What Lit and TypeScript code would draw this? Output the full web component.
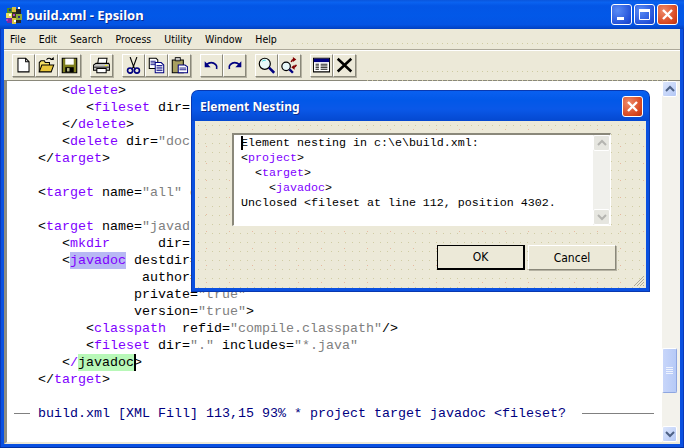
import { LitElement, html, css, svg } from "lit";
import { customElement } from "lit/decorators.js";

const ic = (body: unknown) =>
  html`<svg width="17" height="17" viewBox="0 0 20 20">${body}</svg>`;

const icons = {
  new: svg`<path d="M3.500 1.500h9l4 4v12h-13z" fill="#fff" stroke="#000" stroke-width="1.200"/><path d="M12.500 1.500v4h4" fill="none" stroke="#000" stroke-width="1.200"/>`,
  open: svg`<path d="M1.500 17.500v-11l2-2h4l1 2h5v3" fill="#f5e063" stroke="#000" stroke-width="1.200"/><path d="M1.500 17.500l3-8h14l-3 8z" fill="#e8c63a" stroke="#000" stroke-width="1.200"/><path d="M10 3q3-3 6 0" fill="none" stroke="#000" stroke-width="1.200"/><path d="M14 3.500h4.500v-3.500z" fill="#000"/>`,
  save: svg`<path d="M1.500 1.500h17v17h-17z" fill="#7f7f1f" stroke="#000" stroke-width="1.300"/><path d="M5 2h10v7H5z" fill="#fff"/><path d="M5 12h10v6H5z" fill="#000"/><path d="M7 13h3v4H7z" fill="#b8b88a"/>`,
  print: svg`<path d="M6.500 1.500h10l-1 7h-10z" fill="#fff" stroke="#000" stroke-width="1.200"/><path d="M.5 9.500l3-2h15l1 2v6H.5z" fill="#c0c0c0" stroke="#000" stroke-width="1.200"/><path d="M1 12h18" stroke="#000"/><path d="M4.500 13.500h11v5h-11z" fill="#fff" stroke="#000" stroke-width="1.200"/><path d="M14 10h3" stroke="#ff0"/>`,
  cut: svg`<path d="M6 0l4 11 4-11" fill="none" stroke="#000" stroke-width="1.300"/><path d="M10 11l-2 4M10 11l2 4" stroke="#000" stroke-width="1.300"/><circle cx="6" cy="16" r="3" fill="none" stroke="#000080" stroke-width="1.900"/><circle cx="14" cy="16" r="3" fill="none" stroke="#000080" stroke-width="1.900"/>`,
  copy: svg`<path d="M1.500 1.500h8l2 2v10h-10z" fill="#fff" stroke="#000" stroke-width="1.200"/><path d="M3 5h6M3 7h6M3 9h6" stroke="#000080"/><path d="M8.500 6.500h7l3 3v9h-10z" fill="#fff" stroke="#000080" stroke-width="1.200"/><path d="M10 10h7M10 12h7M10 14h7M10 16h7" stroke="#000080"/>`,
  paste: svg`<path d="M1.500 3.500h13v15h-13z" fill="#a8a060" stroke="#000" stroke-width="1.200"/><path d="M5 .5h6v4H5z" fill="#c0c0c0" stroke="#000"/><path d="M8.500 9.500h8l3 2v7h-11z" fill="#fff" stroke="#000080" stroke-width="1.200"/><path d="M10 13h8M10 15h8" stroke="#000080"/>`,
  undo: svg`<path d="M4 9q6-5 11 0 2 2 1 5" fill="none" stroke="#000080" stroke-width="2"/><path d="M2 5v7h7z" fill="#000080"/>`,
  redo: svg`<path d="M16 9q-6-5-11 0-2 2-1 5" fill="none" stroke="#000080" stroke-width="2"/><path d="M18 5v7h-7z" fill="#000080"/>`,
  find: svg`<circle cx="8" cy="8" r="6.500" fill="#e8f8f8" stroke="#000" stroke-width="1.400"/><path d="M5 5q2-2 4-1" stroke="#2cc" fill="none"/><path d="M13 12.500l6 6" stroke="#000080" stroke-width="3"/>`,
  replace: svg`<circle cx="6" cy="11" r="5" fill="#e8f8f8" stroke="#000" stroke-width="1.400"/><path d="M10 14.500l4 4" stroke="#000080" stroke-width="2.800"/><path d="M12 6q1-3 3-3" stroke="#800000" stroke-width="1.800" fill="none"/><path d="M14 0l4 3-4 3z" fill="#800000"/><path d="M18 9q-1 3-3 3" stroke="#800000" stroke-width="1.800" fill="none"/><path d="M16 9l-4 3 4 3z" fill="#800000"/>`,
  list: svg`<path d="M.5 1.500h19v16H.5z" fill="#fff" stroke="#000" stroke-width="1.200"/><path d="M1 2h18v4H1z" fill="#000080"/><path d="M3 8.500h4M9 8.500h8M3 10.500h4M9 10.500h8M3 12.500h4M9 12.500h8M3 14.500h4M9 14.500h8" stroke="#000"/>`,
  x: svg`<path d="M2 2l16 15M18 2L2 17" stroke="#000" stroke-width="3"/>`,
};

const groups: (keyof typeof icons)[][] = [
  ["new", "open", "save"],
  ["print"],
  ["cut", "copy", "paste"],
  ["undo", "redo"],
  ["find", "replace"],
  ["list", "x"],
];

const t = (s: string) => html`<span class="t">${s}</span>`;
const q = (s: string) => html`<span class="q">${s}</span>`;

const code = [
  html`      &lt;${t("delete")}&gt;`,
  html`         &lt;${t("fileset")} dir=`,
  html`      &lt;/${t("delete")}&gt;`,
  html`      &lt;${t("delete")} dir=${q('"doc')}`,
  html`   &lt;/${t("target")}&gt;`,
  html` `,
  html`   &lt;${t("target")} name=${q('"all"')} d`,
  html` `,
  html`   &lt;${t("target")} name=${q('"javad')}`,
  html`      &lt;${t("mkdir")}      dir=`,
  html`      &lt;<span class="t hl-b">javadoc</span> destdir=`,
  html`                author=`,
  html`               private=${q('"true"')}`,
  html`               version=${q('"true"')}&gt;`,
  html`         &lt;${t("classpath")}  refid=${q('"compile.classpath"')}/&gt;`,
  html`         &lt;${t("fileset")} dir=${q('"."')} includes=${q('"*.java"')}`,
  html`      &lt;<span class="t">/</span><span class="hl-g">javadoc</span><span class="caret"></span>&gt;`,
  html`   &lt;/${t("target")}&gt;`,
  html` `,
];

@customElement("app-root")
export class AppRoot extends LitElement {
  static styles = css`
    :host { display: block; width: 684px; height: 448px; overflow: hidden; position: relative; }
    * { box-sizing: border-box; }
    .window { width: 684px; height: 448px; display: flex; flex-direction: column; background: #0a50e0; padding: 0 4px 4px; box-shadow: inset 0 -1px 0 #0030a0, inset 1px 0 0 #0838b8, inset -1px 0 0 #0838b8; }
    .titlebar {
      height: 29px; margin: 0 -4px; padding: 0 6px; display: flex; align-items: center; flex: none;
      background: linear-gradient(180deg, #0a56dc 0%, #0a62f0 8%, #0356e6 20%, #0258e8 55%, #0454e4 85%, #0340c0 100%);
    }
    .logo { flex: none; margin-right: 4px; }
    .title { font: bold 13px "Noto Sans", sans-serif; color: #fff; text-shadow: 1px 1px 0 #0a2a90; flex: 1; }
    .ctl { width: 21px; height: 21px; margin-left: 2px; border: 1px solid #fff; border-radius: 3px; display: flex; align-items: center; justify-content: center; background: radial-gradient(circle at 30% 30%, #5a8cf5, #2250d8 75%, #1a40c0); }
    .ctl.close { background: radial-gradient(circle at 30% 30%, #ee8a6a, #d8461e 70%, #b83210); }
    .menu { height: 21px; flex: none; display: flex; align-items: center; gap: 13px; padding: 0 0 1px 6px; background: #ece9d8; font: 10.5px "DejaVu Sans", sans-serif; font-stretch: condensed; color: #000; border-bottom: 1px solid #aca899; box-shadow: 0 1px 0 #fff; }
    .menu-dots { flex: 1; height: 5px; margin-right: 8px; margin-top: 10px; background-image: radial-gradient(circle, #d0cca0 0.6px, transparent 0.8px); background-size: 5px 5px; }
    .toolbar { height: 30px; flex: none; display: flex; align-items: flex-start; padding: 3px 0 0 8px; background: #ece9d8; border-bottom: 1px solid #8a887a; margin-top: 1px; }
    .group { display: flex; gap: 0; margin-right: 9px; }
    .btn { width: 23px; height: 23px; display: flex; align-items: center; justify-content: center; background: #ece9d8; border: 1px solid; border-color: #fff #8a887a #8a887a #fff; box-shadow: 1px 1px 0 #b5b2a2; }
    .dots { flex: 1; align-self: stretch; margin: 13px 10px 0 0; background-image: radial-gradient(circle, #cfcba0 0.6px, transparent 0.8px); background-size: 5px 9px; height: 14px; }
    .body { flex: 1; min-height: 0; display: flex; background: #fff; border-left: 3px solid #8f8d80; border-bottom: 2px solid #ece9d8; }
    .code { flex: 1; min-width: 0; padding: 1px 0 0 7px; font: 13.333px/17px "Liberation Mono", monospace; color: #000; }
    .line { height: 17px; white-space: pre; }
    .t { color: #8000ff; }
    .q { color: #808080; }
    .hl-b { background: #b8b8f4; display: inline-block; height: 17px; }
    .hl-g { background: #b8f8b8; display: inline-block; height: 17px; }
    .caret { display: inline-block; width: 2px; height: 17px; margin-right: -2px; background: #000; vertical-align: top; position: relative; }
    .status { color: #000080; }
    .rule { display: inline-block; height: 1px; background: #808080; vertical-align: middle; }
    .rule.a { width: 16px; margin-right: 8px; }
    .rule.b { width: 72px; margin-left: 16px; }
    .sb { width: 18px; flex: none; display: flex; flex-direction: column; background: #f3f2ec; padding-right: 3px; }
    .sb-btn { height: 16px; flex: none; display: flex; align-items: center; justify-content: center; border: 1px solid #fff; border-radius: 2px; background: linear-gradient(135deg, #dce6fc, #b4c8f6); }
    .thumb { height: 45px; margin-top: 251px; flex: none; border: 1px solid #fff; border-right-color: #8ea6e0; border-bottom-color: #8ea6e0; border-radius: 2px; background: linear-gradient(90deg, #c8d6fa, #b6caf7); display: flex; align-items: center; justify-content: center; }
    .sp { flex: 1; }

    .dialog { position: absolute; left: 192px; top: 91px; width: 457px; height: 200px; background: #0a50e0; border-radius: 6px 6px 0 0; padding: 0 3px 3px; display: flex; flex-direction: column; box-shadow: 0 0 0 1px #0838b0; }
    .dlg-title { height: 30px; flex: none; margin: 0 -3px; padding: 1px 6px 0 8px; display: flex; align-items: center; border-radius: 6px 6px 0 0; background: linear-gradient(180deg, #0a60f0 0%, #0258e8 30%, #0a58e8 60%, #0448d0 100%); }
    .dlg-text { flex: 1; font: bold 12px "Noto Sans", sans-serif; color: #fff; text-shadow: 1px 1px 0 #0a2a90; }
    .client { flex: 1; position: relative; background-color: #ece9d8; background-image: radial-gradient(circle, #d0cca4 0.6px, transparent 0.8px), radial-gradient(circle, #e8b8a0 0.5px, transparent 0.7px); background-size: 7px 9px, 23px 17px; padding: 12px 30px 0 37px; }
    .edit { width: 379px; height: 93px; display: flex; background: #fff; border: 1px solid #fff; border-top: 2px solid #8a887a; border-left: 2px solid #8a887a; }
    .edit-text { flex: 1; padding: 1px 0 0 7px; font: 11.667px/15px "Liberation Mono", monospace; color: #000; position: relative; }
    .edit-line { height: 15px; white-space: pre; }
    .edit-caret { position: absolute; left: 7px; top: 1px; width: 2px; height: 14px; background: #000; }
    .edit-sb { width: 17px; flex: none; display: flex; flex-direction: column; background: #f0f0ec; }
    .edit-btn { height: 16px; flex: none; display: flex; align-items: center; justify-content: center; background: #e6e6e0; border: 1px solid #fff; border-radius: 2px; }
    .buttons { display: flex; justify-content: flex-end; gap: 3px; margin-top: 19px; }
    .pbtn { width: 88px; height: 25px; display: flex; align-items: center; justify-content: center; font: 12px "DejaVu Sans", sans-serif; font-stretch: condensed; color: #000; border: 1px solid; border-color: #fff #8a887a #8a887a #fff; background: #ece9d8; box-shadow: 1px 1px 0 #b5b2a2; }
    .pbtn.def { border: 2px solid #000; border-top-width: 1px; border-left-width: 1px; box-shadow: none; }
    .grip { position: absolute; right: 1px; bottom: 1px; }
  `;

  private arrow(up: boolean, color: string) {
    const d = up ? "M1 6l4-4 4 4" : "M1 2l4 4 4-4";
    return html`<svg width="10" height="8" viewBox="0 0 10 8"><path d=${d} fill="none" stroke=${color} stroke-width="2"/></svg>`;
  }

  render() {
    return html`
      <div class="window">
        <div class="titlebar">
          <svg class="logo" width="16" height="18" viewBox="0 0 16 18" shape-rendering="crispEdges">
            <path d="M1 2h5v5H1z" fill="#4a8a2a"/><path d="M6 1h4v5H6z" fill="#d8c040"/><path d="M10 3h5v5h-5z" fill="#222"/>
            <path d="M0 7h6v5H0z" fill="#e8e060"/><path d="M6 6h4v6H6z" fill="#3a3a20"/><path d="M10 8h6v6h-6z" fill="#8aaa3a"/>
            <path d="M1 12h5v5H1z" fill="#7a2aa0"/><path d="M6 12h4v6H6z" fill="#d8c840"/><path d="M10 14h5v3h-5z" fill="#2a2a2a"/>
            <path d="M3 8h2v2H3zM12 1h2v2h-2zM8 14h2v2H8z" fill="#fff"/><path d="M3 3h2v2H3zM12 10h2v2h-2z" fill="#2a2a80"/><path d="M0 13h2v2H0zM7 8h2v2H7z" fill="#b040c0"/>
          </svg>
          <span class="title">build.xml - Epsilon</span>
          <div class="ctl"><svg width="12" height="12" viewBox="0 0 12 12"><path d="M1 8h7v3H1z" fill="#fff"/></svg></div>
          <div class="ctl"><svg width="13" height="13" viewBox="0 0 13 13"><path d="M1.500 1.500h10v10h-10z" fill="none" stroke="#fff"/><path d="M1 1h11v3H1z" fill="#fff"/></svg></div>
          <div class="ctl close"><svg width="13" height="13" viewBox="0 0 13 13"><path d="M2 2l9 9M11 2l-9 9" stroke="#fff" stroke-width="2.400"/></svg></div>
        </div>
        <div class="menu">
          ${["File", "Edit", "Search", "Process", "Utility", "Window", "Help"].map((m) => html`<span>${m}</span>`)}
          <div class="menu-dots"></div>
        </div>
        <div class="toolbar">
          ${groups.map((g) => html`<div class="group">${g.map((i) => html`<div class="btn">${ic(icons[i])}</div>`)}</div>`)}
          <div class="dots"></div>
        </div>
        <div class="body">
          <div class="code">
            ${code.map((l) => html`<div class="line">${l}</div>`)}
            <div class="line status"><span class="rule a"></span>build.xml [XML Fill] 113,15 93% * project target javadoc &lt;fileset?<span class="rule b"></span></div>
          </div>
          <div class="sb">
            <div class="sb-btn">${this.arrow(true, "#4d6185")}</div>
            <div class="thumb"><svg width="7" height="8" viewBox="0 0 7 8"><path d="M0 .5h7M0 2.500h7M0 4.500h7M0 6.500h7" stroke="#eef3fe"/></svg></div>
            <div class="sp"></div>
            <div class="sb-btn">${this.arrow(false, "#4d6185")}</div>
          </div>
        </div>
      </div>

      <div class="dialog">
        <div class="dlg-title">
          <span class="dlg-text">Element Nesting</span>
          <div class="ctl close"><svg width="13" height="13" viewBox="0 0 13 13"><path d="M2 2l9 9M11 2l-9 9" stroke="#fff" stroke-width="2.400"/></svg></div>
        </div>
        <div class="client">
          <div class="edit">
            <div class="edit-text">
              <div class="edit-caret"></div>
              <div class="edit-line">Element nesting in c:\\e\\build.xml:</div>
              <div class="edit-line">&lt;${t("project")}&gt;</div>
              <div class="edit-line">  &lt;${t("target")}&gt;</div>
              <div class="edit-line">    &lt;${t("javadoc")}&gt;</div>
              <div class="edit-line">Unclosed &lt;fileset at line 112, position 4302.</div>
            </div>
            <div class="edit-sb">
              <div class="edit-btn">${this.arrow(true, "#b4b4b0")}</div>
              <div class="sp"></div>
              <div class="edit-btn">${this.arrow(false, "#b4b4b0")}</div>
            </div>
          </div>
          <div class="buttons">
            <div class="pbtn def">OK</div>
            <div class="pbtn">Cancel</div>
          </div>
          <svg class="grip" width="12" height="12" viewBox="0 0 12 12"><path d="M11 1L1 11M11 4l-7 7M11 7l-4 4M11 10l-1 1" stroke="#aca899"/></svg>
        </div>
      </div>
    `;
  }
}
